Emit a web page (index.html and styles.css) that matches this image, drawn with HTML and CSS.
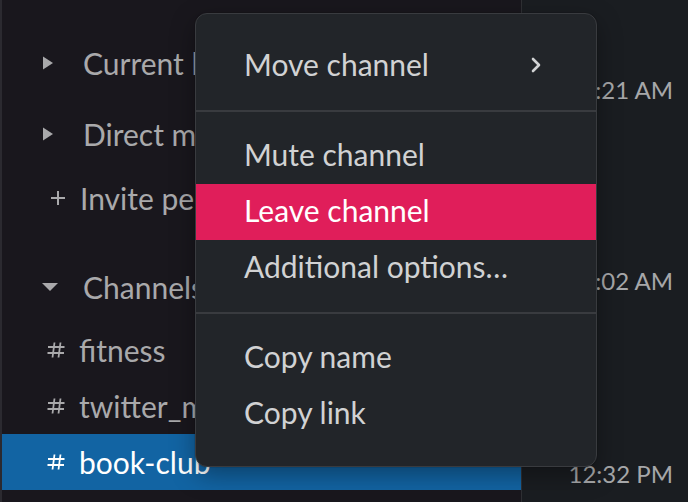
FILE: index.html
```html
<!DOCTYPE html>
<html>
<head>
<meta charset="utf-8">
<link rel="stylesheet" href="styles.css">
</head>
<body>
<div class="app">
  <nav class="sidebar">
    <div class="row row-current">
      <svg class="caret" width="20" height="20" viewBox="0 0 20 20"><path d="M5 0.5 L15 7 L5 13.5 Z" fill="currentColor"/></svg>
      <span class="label">Current l</span>
    </div>
    <div class="row row-direct">
      <svg class="caret" width="20" height="20" viewBox="0 0 20 20"><path d="M5 0.5 L15 7 L5 13.5 Z" fill="currentColor"/></svg>
      <span class="label">Direct messages</span>
    </div>
    <div class="row row-invite">
      <svg class="plus" width="16" height="16" viewBox="0 0 16 16"><path d="M8 1 V15 M1 8 H15" stroke="currentColor" stroke-width="2" fill="none"/></svg>
      <span class="label">Invite people</span>
    </div>
    <div class="row row-channels">
      <svg class="caret-down" width="20" height="20" viewBox="0 0 20 20"><path d="M4 5 L20 5 L12 13 Z" fill="currentColor"/></svg>
      <span class="label">Channels</span>
    </div>
    <div class="row channel row-first">
      <svg class="hash" width="18" height="16" viewBox="0 0 18 16"><path d="M7.5 0.5 L5.5 15.5 M13.5 0.5 L11.5 15.5 M1 5 H17.5 M0.5 11 H17" stroke="currentColor" stroke-width="1.8" fill="none"/></svg>
      <span class="label">fitness</span>
    </div>
    <div class="row channel">
      <svg class="hash" width="18" height="16" viewBox="0 0 18 16"><path d="M7.5 0.5 L5.5 15.5 M13.5 0.5 L11.5 15.5 M1 5 H17.5 M0.5 11 H17" stroke="currentColor" stroke-width="1.8" fill="none"/></svg>
      <span class="label">twitter_marketing</span>
    </div>
    <div class="row channel selected">
      <svg class="hash" width="18" height="16" viewBox="0 0 18 16"><path d="M7.5 0.5 L5.5 15.5 M13.5 0.5 L11.5 15.5 M1 5 H17.5 M0.5 11 H17" stroke="currentColor" stroke-width="1.8" fill="none"/></svg>
      <span class="label">book-club</span>
    </div>
  </nav>
  <main class="main">
    <div class="time t1">12:21 AM</div>
    <div class="time t2">12:02 AM</div>
    <div class="time t3">12:32 PM</div>
  </main>

  <div class="menu">
    <div class="item has-sub">
      <span>Move channel</span>
      <svg class="chev" width="12" height="16" viewBox="0 0 12 16"><path d="M3 2 L9 8 L3 14" stroke="currentColor" stroke-width="2.6" fill="none" stroke-linecap="round" stroke-linejoin="round"/></svg>
    </div>
    <div class="sep"></div>
    <div class="item">Mute channel</div>
    <div class="item danger">Leave channel</div>
    <div class="item">Additional options…</div>
    <div class="sep"></div>
    <div class="item">Copy name</div>
    <div class="item">Copy link</div>
  </div>
</div>
</body>
</html>
```

FILE: styles.css
```css
html, body {
  margin: 0;
  padding: 0;
}
body {
  background: #1a1d21;
  font-family: Lato, "Noto Sans", sans-serif;
  overflow: hidden;
}
.app {
  position: relative;
  display: flex;
  width: 688px;
  height: 502px;
  overflow: hidden;
}
.sidebar {
  box-sizing: border-box;
  width: 522px;
  flex: none;
  height: 502px;
  background: #19171d;
  border-left: 2px solid #2b2a30;
  border-right: 1px solid #2f3034;
  padding-top: 35px;
  color: #a9a9ab;
  font-size: 30px;
}
.row {
  display: flex;
  align-items: center;
  height: 56px;
  line-height: 56px;
  white-space: nowrap;
  overflow: hidden;
}
.row .label {
  line-height: 56px;
}
.caret {
  margin-left: 36px;
  margin-right: 25px;
  margin-top: 6px;
  flex: none;
}
.caret-down {
  margin-left: 36px;
  margin-right: 25px;
  margin-top: 2px;
  flex: none;
}
.plus {
  margin-left: 48px;
  margin-right: 14px;
  flex: none;
}
.hash {
  margin-left: 45px;
  margin-right: 14px;
  flex: none;
}
.row-direct { margin-top: 15px; }
.row-invite { margin-top: 8px; }
.row-channels { margin-top: 33px; }
.row-first { margin-top: 7px; }
.selected {
  background: #1264a3;
  color: #ffffff;
}

.main {
  flex: 1;
  display: flex;
  flex-direction: column;
  align-items: flex-end;
  padding-right: 15px;
  color: #a6a7a9;
  font-size: 24px;
}
.time {
  line-height: 30px;
  white-space: nowrap;
}
.t1 { margin-top: 75px; }
.t2 { margin-top: 161px; }
.t3 { margin-top: 163px; }

.menu {
  position: absolute;
  left: 195px;
  top: 13px;
  width: 402px;
  box-sizing: border-box;
  background: #222529;
  border: 1px solid #393b3f;
  border-radius: 12px;
  padding: 24px 0;
  color: #d1d2d3;
  font-size: 30px;
  box-shadow: 0 0 0 1px rgba(0,0,0,0.08), 0 8px 24px rgba(0,0,0,0.35);
}
.item {
  display: flex;
  align-items: center;
  justify-content: space-between;
  height: 56px;
  box-sizing: border-box;
  padding: 0 54px 4px 48px;
  line-height: 52px;
  white-space: nowrap;
}
.item.danger {
  background: #e01e5a;
  color: #ffffff;
}
.chev {
  margin-top: 2px;
  color: #d1d2d3;
}
.sep {
  height: 2px;
  background: #393b3f;
  margin: 16px 0;
}
```
